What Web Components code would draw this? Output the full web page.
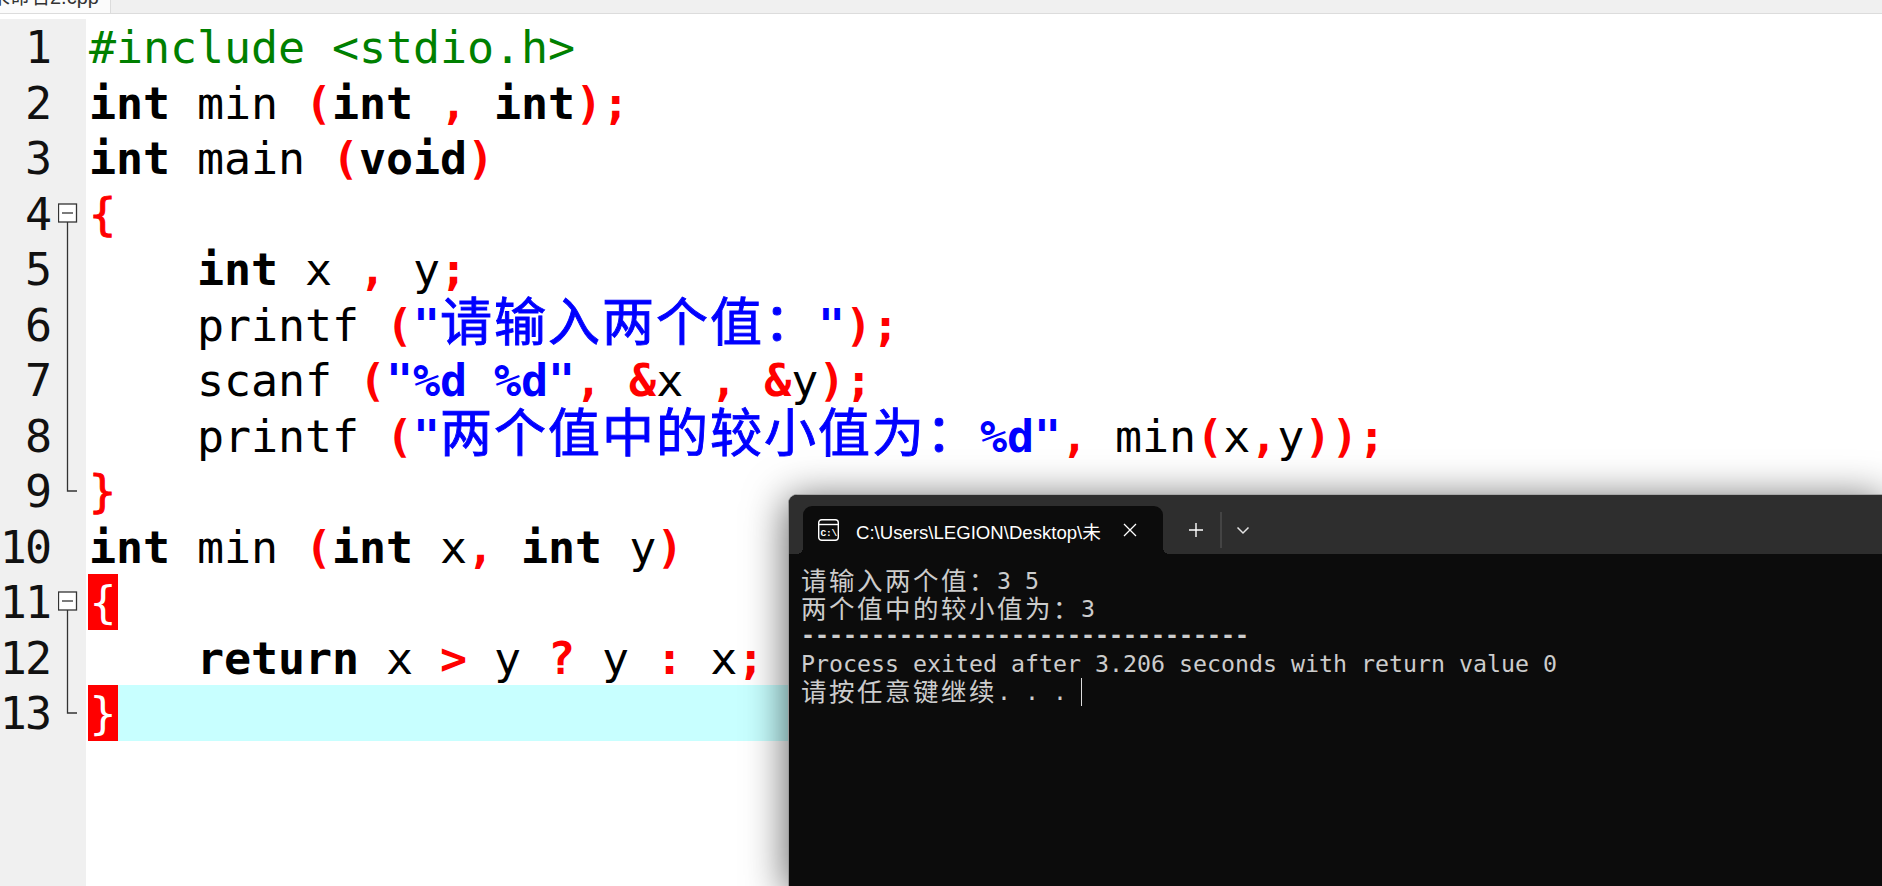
<!DOCTYPE html>
<html>
<head>
<meta charset="utf-8">
<style>
html, body { margin: 0; padding: 0; height: 100%; overflow: hidden; background: #fff; }
</style>
</head>
<body>
<editor-screen>
  <editor-tabs slot="tabs" label="未命名2.cpp"></editor-tabs>
  <code-line n="1"><span class="pp">#include &lt;stdio.h&gt;</span></code-line>
  <code-line n="2"><b>int</b> min <i>(</i><b>int</b> <i>,</i> <b>int</b><i>);</i></code-line>
  <code-line n="3"><b>int</b> main <i>(</i><b>void</b><i>)</i></code-line>
  <code-line n="4" fold="open"><q>{</q></code-line>
  <code-line n="5" fold="line">    <b>int</b> x <i>,</i> y<i>;</i></code-line>
  <code-line n="6" fold="line">    printf <i>(</i><u>"<em>请输入两个值：</em>"</u><i>);</i></code-line>
  <code-line n="7" fold="line">    scanf <i>(</i><u>"%d %d"</u><i>,</i> <i>&amp;</i>x <i>,</i> <i>&amp;</i>y<i>);</i></code-line>
  <code-line n="8" fold="line">    printf <i>(</i><u>"<em>两个值中的较小值为：</em>%d"</u><i>,</i> min<i>(</i>x<i>,</i>y<i>));</i></code-line>
  <code-line n="9" fold="end"><q>}</q></code-line>
  <code-line n="10"><b>int</b> min <i>(</i><b>int</b> x<i>,</i> <b>int</b> y<i>)</i></code-line>
  <code-line n="11" fold="open"><s>{</s></code-line>
  <code-line n="12" fold="line">    <b>return</b> x <i>&gt;</i> y <i>?</i> y <i>:</i> x<i>;</i></code-line>
  <code-line n="13" fold="end" current><s>}</s></code-line>
</editor-screen>
<terminal-window title="C:\Users\LEGION\Desktop\未命名2.exe">请输入两个值：3 5
两个值中的较小值为：3
--------------------------------
Process exited after 3.206 seconds with return value 0
请按任意键继续. . . </terminal-window>
<script>
class EditorTabs extends HTMLElement {
    connectedCallback() {
        this.attachShadow({mode: "open"});
        this.shadowRoot.innerHTML = `
        <style>
        :host { display: flex; height: 13px; background: #f0f0f0; border-bottom: 1px solid #dcdcdc; margin-bottom: 5px; overflow: hidden; }
        .tab { width: 110px; height: 14px; background: #fbfbfb; border-right: 1px solid #dcdcdc; overflow: hidden; font: 20px/20px "Liberation Sans", "Noto Sans CJK SC", sans-serif; color: #333; }
        span { display: block; margin: -13px 0 0 -10px; white-space: nowrap; }
        </style>
        <div class="tab"><span></span></div>`;
        this.shadowRoot.querySelector("span").textContent = this.getAttribute("label");
    }
}

class EditorScreen extends HTMLElement {
    connectedCallback() {
        this.attachShadow({mode: "open"});
        this.shadowRoot.innerHTML = `
        <style>
        :host { display: block; position: relative; height: 886px; background: #fff; overflow: hidden; }
        .gutter { position: absolute; left: 0; top: 19px; bottom: 0; width: 86px; background: #f0f0f0; }
        .lines { position: relative; }
        </style>
        <slot name="tabs"></slot>
        <div class="gutter"></div>
        <div class="lines"><slot></slot></div>`;
    }
}

class CodeLine extends HTMLElement {
    connectedCallback() {
        this.attachShadow({mode: "open"});
        const fold = this.getAttribute("fold");
        let mark = "";
        if (fold === "open") {
            mark = `<svg width="20" height="56" viewBox="0 0 20 56" stroke="#333" stroke-width="1.3"><rect x="0.5" y="18" width="18" height="18" fill="#fff"/><path d="M4 27h11"/><path d="M9.5 36V56"/></svg>`;
        } else if (fold === "line") {
            mark = `<svg width="20" height="56" viewBox="0 0 20 56" stroke="#333" stroke-width="1.3"><path d="M9.5 0V56"/></svg>`;
        } else if (fold === "end") {
            mark = `<svg width="20" height="56" viewBox="0 0 20 56" stroke="#333" stroke-width="1.3" fill="none"><path d="M9.5 0V28H19"/></svg>`;
        }
        this.shadowRoot.innerHTML = `
        <style>
        :host { display: grid; grid-template-columns: 50px 8px 20px 10px 1fr; height: 55.5px; font: 45px/57px "DejaVu Sans Mono", "Noto Sans CJK SC", monospace; color: #000; white-space: pre; }
        .n { display: flex; justify-content: flex-end; color: #111; letter-spacing: -2px; }
        .code { grid-column: 5; padding-left: 1px; height: 55.5px; letter-spacing: -0.09px; }
        .fold { grid-column: 3; height: 55.5px; overflow: hidden; }
        :host([current]) .code { background: #c8ffff; }
        ::slotted(*) { font-style: normal; text-decoration: none; }
        </style>
        <span class="n"><span>${this.getAttribute("n")}</span></span>
        <span class="fold">${mark}</span>
        <span class="code"><slot></slot></span>`;
        this.paintTokens();
    }

    // the light dom tags carry the token kind
    paintTokens() {
        const kinds = {
            B: "font-weight:700;color:#000",
            I: "font-weight:700;font-style:normal;color:#f00",
            U: "font-weight:700;text-decoration:none;color:#00f",
            Q: "quotes:none;color:#f00;-webkit-text-stroke:1px #f00",
            S: "text-decoration:none;color:#fff;background:#f00;display:inline-block;width:30px;height:55.5px;margin-left:-1px;text-align:center",
            EM: "font-size:52px;letter-spacing:2px;line-height:1;font-weight:400;font-style:normal;color:#00f;-webkit-text-stroke:.9px #00f"
        };
        this.querySelectorAll("*").forEach((el) => {
            if (el.classList.contains("pp")) {
                el.style.cssText = "color:#008000";
            } else if (kinds[el.tagName]) {
                el.style.cssText = kinds[el.tagName];
            }
        });
    }
}

class TerminalWindow extends HTMLElement {
    connectedCallback() {
        const text = this.textContent;
        this.textContent = "";
        this.attachShadow({mode: "open"});
        this.shadowRoot.innerHTML = `
        <style>
        :host { display: flex; flex-direction: column; position: absolute; left: 788px; top: 494px; right: 0; bottom: 0; background: #0c0c0c; border-top: 1px solid #a8a8a8; border-left: 1px solid #9a9a9a; border-top-left-radius: 9px; box-shadow: 0 6px 40px 2px rgba(0,0,0,.6); box-sizing: border-box; }
        .bar { display: flex; align-items: flex-end; height: 59px; background: #2e2e2e; padding-left: 14px; flex: none; border-top-left-radius: 8px; }
        .tab { position: relative; display: flex; align-items: center; width: 360px; height: 48px; background: #0c0c0c; border-radius: 9px 9px 0 0; color: #fff; font: 18.6px "Liberation Sans", "Noto Sans CJK SC", sans-serif; box-sizing: border-box; padding-left: 15px; }
        .tab::before, .tab::after { content: ""; position: absolute; bottom: 0; width: 6px; height: 6px; }
        .tab::before { left: -6px; background: radial-gradient(circle at 0 0, transparent 6px, #0c0c0c 6px); }
        .tab::after { right: -6px; background: radial-gradient(circle at 100% 0, transparent 6px, #0c0c0c 6px); }
        .title { width: 245px; margin-left: 17px; white-space: nowrap; overflow: hidden; }
        .close { margin-left: 22px; display: flex; }
        .btns { display: flex; align-items: center; height: 48px; color: #fff; }
        .plus { margin-left: 25px; display: flex; }
        .sep { width: 2px; height: 36px; background: #444; margin-left: 16px; }
        .chev { margin-left: 14px; display: flex; }
        pre { margin: 0; padding: 13px 0 0 12px; font: 23.25px/27.75px "DejaVu Sans Mono", "Noto Sans CJK SC", monospace; color: #cccccc; }
        .cursor { display: inline-block; width: 1px; height: 28px; background: #ddd; vertical-align: -6px; }
        em { font-style: normal; font-size: 25.5px; letter-spacing: 2.5px; vertical-align: -1px; line-height: 1; }
        .dash { vertical-align: 2px; line-height: 1; font-weight: 700; }
        </style>
        <div class="bar">
          <div class="tab">
            <svg width="21" height="22" viewBox="0 0 21 22" fill="none" stroke="#fff" stroke-width="1.4"><rect x="0.7" y="0.7" width="19.6" height="20.6" rx="3"/><path d="M1 5.5h19"/><text x="2.6" y="16.5" fill="#fff" stroke="none" font-family="Liberation Mono" font-size="9.5" font-weight="700" letter-spacing="-.3">C:\\</text></svg>
            <span class="title"></span>
            <span class="close"><svg width="14" height="14" viewBox="0 0 14 14" stroke="#fff" stroke-width="1.3"><path d="M1 1L13 13M13 1L1 13"/></svg></span>
          </div>
          <div class="btns">
            <span class="plus"><svg width="16" height="16" viewBox="0 0 16 16" stroke="#fff" stroke-width="1.4"><path d="M8 1V15M1 8H15"/></svg></span>
            <span class="sep"></span>
            <span class="chev"><svg width="14" height="14" viewBox="0 0 14 14" fill="none" stroke="#e4e4e4" stroke-width="1.5"><path d="M1.5 4.5L7 10L12.5 4.5"/></svg></span>
          </div>
        </div>
        <pre></pre>`;
        this.shadowRoot.querySelector(".title").textContent = this.getAttribute("title");
        this.removeAttribute("title");
        const pre = this.shadowRoot.querySelector("pre");
        pre.innerHTML = text
            .replace(/[\u3000-\u9fff\uff00-\uffef]+/g, (m) => `<em>${m}</em>`)
            .replace(/-+/, (m) => `<span class="dash">${m}</span>`) + '<span class="cursor"></span>';
    }
}

customElements.define("editor-tabs", EditorTabs);
customElements.define("editor-screen", EditorScreen);
customElements.define("code-line", CodeLine);
customElements.define("terminal-window", TerminalWindow);
</script>
</body>
</html>
